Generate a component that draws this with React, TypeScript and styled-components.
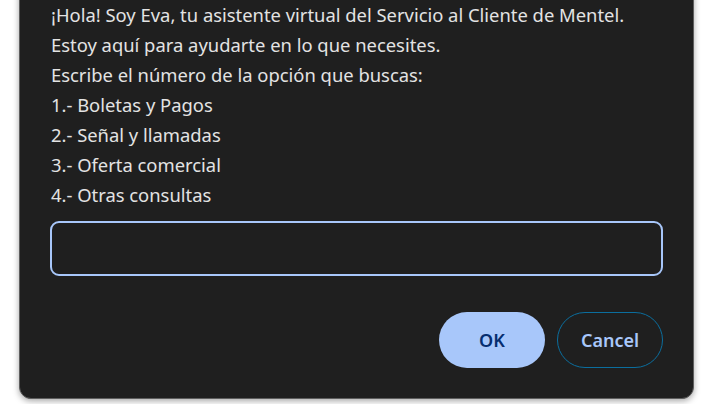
import React from 'react';
import styled, { createGlobalStyle } from 'styled-components';

const GlobalStyle = createGlobalStyle`
  html, body {
    margin: 0;
    padding: 0;
    background: #ffffff;
  }
`;

const options = [
  '1.- Boletas y Pagos',
  '2.- Señal y llamadas',
  '3.- Oferta comercial',
  '4.- Otras consultas',
];

const App: React.FC = () => {
  return (
    <>
      <GlobalStyle />
      <StyledPage>
        <StyledDialog>
          <StyledMessage>
            <StyledLine>¡Hola! Soy Eva, tu asistente virtual del Servicio al Cliente de Mentel.</StyledLine>
            <StyledLine>Estoy aquí para ayudarte en lo que necesites.</StyledLine>
            <StyledLine>Escribe el número de la opción que buscas:</StyledLine>
            {options.map((o) => (
              <StyledLine key={o}>{o}</StyledLine>
            ))}
          </StyledMessage>
          <StyledInput type="text" />
          <StyledActions>
            <StyledButton variant="primary">OK</StyledButton>
            <StyledButton variant="secondary">Cancel</StyledButton>
          </StyledActions>
        </StyledDialog>
      </StyledPage>
    </>
  );
};

const StyledPage = styled.div`
  height: 404px;
  width: 719px;
  overflow: hidden;
  display: flex;
  flex-direction: column;
  justify-content: flex-end;
  padding: 0 0 5px 19px;
  box-sizing: border-box;
`;

const StyledDialog = styled.div`
  flex-shrink: 0;
  width: 675px;
  box-sizing: border-box;
  padding: 24px 30px 30px 31px;
  background: #1f1f1f;
  border: 1px solid #5e5e5e;
  border-radius: 12px;
  box-shadow: 0 2px 6px rgba(0, 0, 0, 0.35);
  font-family: 'Noto Sans', 'Open Sans', sans-serif;
  color: #e3e3e3;
`;

const StyledMessage = styled.div`
  display: flex;
  flex-direction: column;
`;

const StyledLine = styled.div`
  font-size: 18.4px;
  line-height: 30px;
  white-space: nowrap;
`;

const StyledInput = styled.input`
  display: block;
  margin-top: 11px;
  margin-left: -1px;
  width: calc(100% + 1px);
  height: 55px;
  box-sizing: border-box;
  background: #1f1f1f;
  border: 2px solid #a8c7fa;
  border-radius: 9px;
  outline: none;
  color: #e3e3e3;
  font-family: inherit;
  font-size: 18px;
  padding: 0 14px;
`;

const StyledActions = styled.div`
  display: flex;
  justify-content: flex-end;
  gap: 12px;
  margin-top: 36px;
`;

const StyledButton = styled.button<{ variant: 'primary' | 'secondary' }>`
  height: 56px;
  width: 106px;
  border-radius: 28px;
  font-family: 'Noto Sans', 'Open Sans', sans-serif;
  font-size: 18px;
  font-weight: 600;
  cursor: pointer;
  box-sizing: border-box;
  background: ${({ variant }) => (variant === 'primary' ? '#a8c7fa' : 'transparent')};
  color: ${({ variant }) => (variant === 'primary' ? '#062e6f' : '#a8c7fa')};
  border: ${({ variant }) => (variant === 'primary' ? 'none' : '1.5px solid #0b6e9e')};
`;

export default App;
